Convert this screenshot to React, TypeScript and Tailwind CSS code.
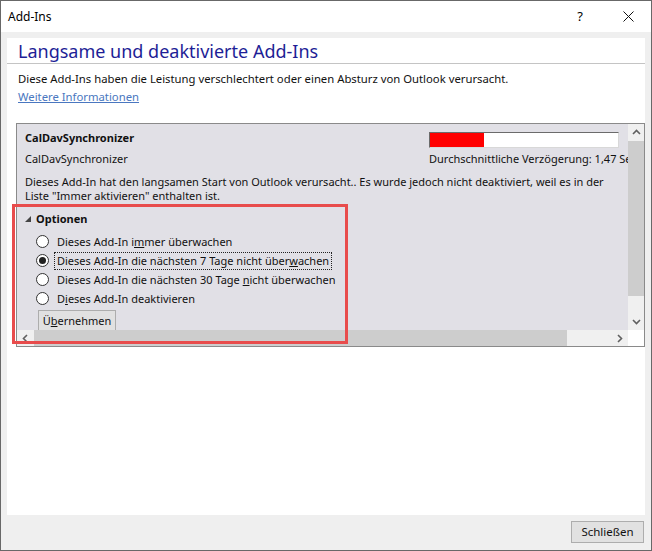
import React from "react";

const font = { fontFamily: '"Noto Sans", "Open Sans", sans-serif' };

function Chevron({ dir }: { dir: "up" | "down" | "left" | "right" }) {
  const d = {
    up: "M1 6 L4.5 2.5 L8 6",
    down: "M1 3 L4.5 6.5 L8 3",
    left: "M6 1 L2.5 4.5 L6 8",
    right: "M3 1 L6.5 4.5 L3 8",
  }[dir];
  return (
    <svg width="9" height="9" viewBox="0 0 9 9">
      <path d={d} fill="none" stroke="#606060" strokeWidth="1.6" />
    </svg>
  );
}

function Radio({ checked, children }: { checked?: boolean; children: React.ReactNode }) {
  return (
    <div className="flex items-center h-[19px]">
      <span className="w-[13px] h-[13px] rounded-full border border-[#333] bg-white flex items-center justify-center ml-[19px] mr-[8px] shrink-0">
        {checked && <span className="w-[7px] h-[7px] rounded-full bg-[#222]" />}
      </span>
      <span
        className={
          checked
            ? "border border-dotted border-[#222] px-[2px] -ml-[3px] leading-[16px] whitespace-nowrap"
            : "leading-[16px] whitespace-nowrap"
        }
      >
        {children}
      </span>
    </div>
  );
}

export default function App() {
  return (
    <div
      className="relative w-[652px] h-[551px] border border-[#686868] bg-[#efefef] flex flex-col text-[11.3px] text-[#111] overflow-hidden"
      style={font}
    >
      {/* title bar */}
      <div className="h-[31px] bg-white flex items-center pl-[7px] shrink-0">
        <span className="text-[12px] text-black">Add-Ins</span>
        <span className="ml-auto mr-[40px] text-[13px] text-black">?</span>
        <svg width="11" height="11" viewBox="0 0 11 11" className="mr-[17px]">
          <path d="M0.5 0.5 L10.5 10.5 M10.5 0.5 L0.5 10.5" stroke="#111" strokeWidth="1" />
        </svg>
      </div>

      {/* body */}
      <div className="flex-1 flex flex-col px-[6px] pt-[6px]">
        <div className="flex-1 bg-white flex flex-col">
          <div className="h-[26px] border-b border-[#c4c4c4] pl-[11px] flex items-end">
            <span className="text-[18px] leading-[24px] text-[#1e1e96]">
              Langsame und deaktivierte Add-Ins
            </span>
          </div>
          <div className="pl-[11px] mt-[7px] leading-[16px]">
            Diese Add-Ins haben die Leistung verschlechtert oder einen Absturz von Outlook verursacht.
          </div>
          <div className="pl-[11px] mt-[2px] leading-[16px]">
            <span className="text-[#4a77c0] underline">Weitere Informationen</span>
          </div>

          {/* add-in box */}
          <div className="ml-[9px] mt-[18px] h-[224px] border border-[#8a8a8a] grid grid-cols-[1fr_16px] grid-rows-[1fr_16px] text-[11px]">
            <div className="bg-[#e1e0e6] overflow-hidden relative">
              <div className="flex pl-[8px] pt-[6px]">
                <div className="flex-1">
                  <div className="font-bold leading-[16px]">CalDavSynchronizer</div>
                  <div className="leading-[16px] mt-[5px]">CalDavSynchronizer</div>
                </div>
                <div className="w-[199px] shrink-0 overflow-hidden">
                  <div className="w-[190px] h-[16px] border border-t-[#6b6b6b] border-l-[#6b6b6b] border-r-[#d8d8d8] border-b-[#d8d8d8] bg-white mt-[2px]">
                    <div className="w-[54px] h-full bg-[#ff0000]" />
                  </div>
                  <div className="whitespace-nowrap leading-[16px] mt-[3px]">
                    Durchschnittliche Verzögerung: 1,47 Sekunden
                  </div>
                </div>
              </div>
              <div className="pl-[8px] mt-[8px] leading-[14px] whitespace-nowrap">
                Dieses Add-In hat den langsamen Start von Outlook verursacht.. Es wurde jedoch nicht deaktiviert, weil es in der
                <br />
                Liste "Immer aktivieren" enthalten ist.
              </div>
              <div className="pl-[8px] mt-[8px] flex items-center h-[16px]">
                <svg width="6" height="6" viewBox="0 0 6 6" className="mr-[5px]">
                  <path d="M6 0 L6 6 L0 6 Z" fill="#444" />
                </svg>
                <span className="font-bold">Optionen</span>
              </div>
              <div className="mt-[5px] flex flex-col">
                <Radio>
                  Dieses Add-In i<span className="underline">m</span>mer überwachen
                </Radio>
                <Radio checked>
                  Dieses Add-In die nächsten 7 Tage nicht über<span className="underline">w</span>achen
                </Radio>
                <Radio>
                  Dieses Add-In die nächsten 30 Tage <span className="underline">n</span>icht überwachen
                </Radio>
                <Radio>
                  D<span className="underline">i</span>eses Add-In deaktivieren
                </Radio>
              </div>
              <div className="ml-[21px] mt-[2px] w-[78px] h-[22px] border border-[#adadad] bg-[#e1e1e1] flex items-start pt-[2px] justify-center">
                <span>
                  Ü<span className="underline">b</span>ernehmen
                </span>
              </div>
            </div>
            {/* vertical scrollbar */}
            <div className="bg-[#f0f0f0] flex flex-col items-center">
              <div className="h-[17px] flex items-center justify-center">
                <Chevron dir="up" />
              </div>
              <div className="w-[16px] h-[155px] bg-[#cdcdcd]" />
              <div className="flex-1" />
              <div className="h-[17px] flex items-center justify-center">
                <Chevron dir="down" />
              </div>
            </div>
            {/* horizontal scrollbar */}
            <div className="bg-[#f0f0f0] flex items-center">
              <div className="w-[17px] flex items-center justify-center">
                <Chevron dir="left" />
              </div>
              <div className="w-[533px] h-full bg-[#cdcdcd]" />
              <div className="flex-1" />
              <div className="w-[17px] flex items-center justify-center">
                <Chevron dir="right" />
              </div>
            </div>
            <div className="bg-white" />
          </div>
        </div>

        {/* footer */}
        <div className="h-[35px] flex items-start pt-[6px] justify-end pr-[1px] shrink-0">
          <div className="w-[73px] h-[22px] border border-[#adadad] bg-[#e1e1e1] flex items-center justify-center text-[11.5px]">
            Schließen
          </div>
        </div>
      </div>

      {/* annotation */}
      <div className="absolute left-[11px] top-[203px] w-[336px] h-[140px] border-[3px] border-[#e84c4c] pointer-events-none" />
    </div>
  );
}
